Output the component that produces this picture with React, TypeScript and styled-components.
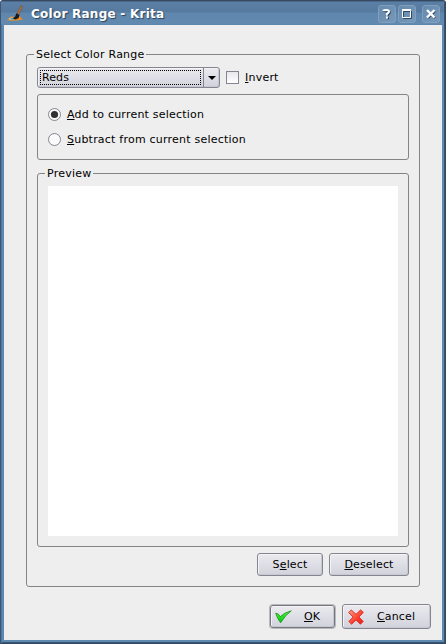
import React from "react";
import styled, { createGlobalStyle, css } from "styled-components";

const GlobalStyle = createGlobalStyle`
  * { box-sizing: border-box; }
  html, body { margin: 0; padding: 0; background: #fff; }
  body {
    font: 11px/14px "DejaVu Sans", sans-serif;
    letter-spacing: 0.22px;
    color: #000;
    overflow: hidden;
  }
`;

const Window = styled.div`
  width: 446px;
  height: 644px;
  display: flex;
  flex-direction: column;
  padding: 0 3px 3px;
  background: #5e89b1;
  border: 1px solid;
  border-color: #344961 #344961 #344961 #3c5673;
  border-radius: 3px 3px 0 0;
  box-shadow: inset 1px 0 #5178a0, inset -1px -1px #3a5370;
`;

const TitleBar = styled.header`
  flex: none;
  height: 24px;
  margin: 0 -2px 0 -3px;
  padding: 0 4px 0 6px;
  display: flex;
  align-items: center;
  border-top: 1px solid #49688a;
  border-bottom: 1px solid #5c86ae;
  background: linear-gradient(#5c7fa5 0, #56799f 45%, #5f87ae 50%, #628ab1 100%);
`;

const Title = styled.h1`
  flex: 1;
  margin: 1px 0 0 8px;
  font-size: 12px;
  line-height: 18px;
  letter-spacing: 0.25px;
  font-weight: bold;
  color: #fff;
  text-shadow: 1px 1px 1px #29405a;
`;

const TitleButton = styled.button<{ $apart?: boolean }>`
  width: 18px;
  height: 18px;
  margin: 1px 0 0 ${(p) => (p.$apart ? 6 : 2)}px;
  padding: 0;
  display: flex;
  align-items: center;
  justify-content: center;
  border: 1px solid #7f9fbd;
  border-radius: 3px;
  background: linear-gradient(135deg, #658aae, #7799b9);
  svg { display: block; }
`;

const Content = styled.main`
  flex: 1;
  padding: 29px 22px 0;
  background: #eeeeee;
`;

const Group = styled.section<{ $height: number; $pad: string; $gap?: number }>`
  height: ${(p) => p.$height}px;
  padding: ${(p) => p.$pad};
  margin-top: ${(p) => p.$gap ?? 0}px;
  border: 1px solid #848484;
  border-radius: 3px;
`;

const Legend = styled.div<{ $space: number }>`
  width: max-content;
  height: 14px;
  margin: -7px 0 ${(p) => p.$space}px -3px;
  padding: 0 2px 0 2px;
  background: #eeeeee;
`;

const Row = styled.div`
  display: flex;
  align-items: center;
  height: 21px;
`;

const raised = css`
  border: 1px solid #858592;
  border-radius: 3px;
  background: linear-gradient(#eaeaee, #dedee6 50%, #d2d2dc);
  box-shadow: inset 1px 1px #f4f4f6, inset -1px -1px #c7c7d2;
`;

const Combo = styled.div`
  ${raised}
  width: 183px;
  height: 21px;
  display: flex;
`;

const ComboValue = styled.div`
  width: 161px;
  margin: 2px 2px 2px 2px;
  padding-left: 1px;
  line-height: 13px;
  letter-spacing: 0.1px;
  border: 1px dotted #000;
`;

const ComboArrow = styled.div`
  flex: 1;
  display: flex;
  align-items: center;
  justify-content: center;
  border-left: 1px solid #858592;
`;

const CheckBox = styled.span`
  width: 13px;
  height: 13px;
  margin: 0 6px 0 6px;
  border: 1px solid #858592;
  background: linear-gradient(#e8e8ec, #ffffff);
`;

const Radio = styled.label<{ $gap?: number }>`
  display: flex;
  align-items: center;
  height: 13px;
  margin-top: ${(p) => p.$gap ?? 0}px;
`;

const RadioDot = styled.span`
  width: 13px;
  height: 13px;
  margin-right: 6px;
  display: flex;
  svg { display: block; }
`;

const Key = styled.span`
  text-decoration: underline;
  text-decoration-thickness: 1px;
  text-underline-offset: 1px;
  text-decoration-skip-ink: none;
`;

const Preview = styled.div`
  width: 350px;
  height: 350px;
  background: #fff;
`;

const Actions = styled.div<{ $gap: number; $top: number; $pull?: number }>`
  display: flex;
  justify-content: flex-end;
  gap: ${(p) => p.$gap}px;
  margin: ${(p) => p.$top}px ${(p) => p.$pull ?? 0}px 0 0;
`;

const Button = styled.button<{ $width: number; $tall?: boolean; $default?: boolean }>`
  ${raised}
  width: ${(p) => p.$width}px;
  height: ${(p) => (p.$tall ? 25 : 23)}px;
  padding: 0;
  display: flex;
  align-items: center;
  justify-content: ${(p) => (p.$tall ? "flex-start" : "center")};
  font: inherit;
  letter-spacing: 0.15px;
  color: #000;
  ${(p) =>
    p.$default &&
    css`
      border-color: #777780;
      box-shadow: inset 1px 1px #f4f4f6, inset -1px -1px #c7c7d2, 0 0 0 1px #b9b9bd;
      height: 23px;
      margin: 1px;
    `}
`;

const ButtonIcon = styled.span<{ $left: number; $gap: number }>`
  margin-left: ${(p) => p.$left}px;
  margin-right: ${(p) => p.$gap}px;
  svg { display: block; }
`;

const BrushIcon = () => (
  <svg width="16" height="17" viewBox="0 0 17 17" preserveAspectRatio="none">
    <path d="M0 14.5 4 11.5 9 12 13 11 17 14.5 11 15.5 3 15.8Z" fill="#e98a24" />
    <path d="M2 13.5 6 12 7 14.8 3 15Z" fill="#b9c6b5" />
    <path d="M4 13h3v1.5H4z" fill="#36a1c4" />
    <path d="M14.7.5 16.5 1.3 12.5 10 10.5 9Z" fill="#b9713a" stroke="#6c4932" strokeWidth=".5" />
    <path d="M10 8.2 13.2 10 12.4 13 9 14.5 6 13.2 8.6 11.8Z" fill="#171a20" />
  </svg>
);

const RadioArt = ({ on = false }: { on?: boolean }) => (
  <svg width="13" height="13" viewBox="0 0 13 13">
    <circle cx="6.5" cy="6.5" r="6" fill="#fafafa" stroke="#858592" />
    {on && <circle cx="6.5" cy="6.5" r="3.6" fill="#303030" />}
  </svg>
);

const CheckIcon = () => (
  <svg width="17" height="14" viewBox="0 0 17 14">
    <defs>
      <linearGradient id="green" x2="0" y2="1">
        <stop stopColor="#55f04b" />
        <stop offset="1" stopColor="#00c800" />
      </linearGradient>
    </defs>
    <path d="M.6 3.2 3 3.8 5.4 6.6Q9.5 2.3 16.3.8 10 5.5 5.6 12.8 2.5 9 .6 3.2Z" fill="url(#green)" stroke="#138a13" strokeWidth=".7" />
  </svg>
);

const CrossIcon = () => (
  <svg width="16" height="16" viewBox="0 0 16 16">
    <defs>
      <linearGradient id="red" x2="1" y2="1">
        <stop stopColor="#ff9c80" />
        <stop offset=".6" stopColor="#fb3e2c" />
        <stop offset="1" stopColor="#ee1515" />
      </linearGradient>
    </defs>
    <path d="M3.2.9 8 5.3 12.7.8 15.3 3.4 10.9 8 15.2 12.4 12.4 15.2 8 11 3.6 15.2.8 12.5 5.1 8 .7 3.7Z" fill="url(#red)" stroke="#d62b25" strokeWidth=".9" strokeLinejoin="round" />
  </svg>
);

export default function App() {
  return (
    <>
      <GlobalStyle />
      <Window>
        <TitleBar>
          <BrushIcon />
          <Title>Color Range - Krita</Title>
          <TitleButton aria-label="Help">
            <svg width="12" height="12" viewBox="0 0 12 12" fill="none">
              <path d="M3.5 4V3.6Q4.2 3 6.2 3 8.8 3 8.8 4.7 8.8 5.8 7 6.8V8.2M7 9.2v2" stroke="#2e4661" strokeWidth="2" />
              <path d="M2.5 3V2.6Q3.2 2 5.4 2 8 2 8 3.7 8 4.8 6 5.8V7.5M6 8.5v2" stroke="#fff" strokeWidth="2" />
            </svg>
          </TitleButton>
          <TitleButton aria-label="Maximize">
            <svg width="12" height="12" viewBox="0 0 12 12" fill="none">
              <path d="M2.5 3.5h8v7h-8z" stroke="#2e4661" />
              <path d="M1.5 2.5h8v7h-8zM1 1.5h9" stroke="#fff" />
            </svg>
          </TitleButton>
          <TitleButton aria-label="Close" $apart>
            <svg width="12" height="12" viewBox="0 0 12 12" fill="none" strokeWidth="2.4">
              <path d="m3 3 7 7m0-7-7 7" stroke="#2e4661" />
              <path d="m2 2 7.5 7.5m0-7.5L2 9.5" stroke="#fff" />
            </svg>
          </TitleButton>
        </TitleBar>
        <Content>
          <Group $height={533} $pad="0 10px">
            <Legend $space={5}>Select Color Range</Legend>
            <Row>
              <Combo>
                <ComboValue>Reds</ComboValue>
                <ComboArrow>
                  <svg width="8" height="4" viewBox="0 0 8 4"><path d="M0 0h8L4 4Z" /></svg>
                </ComboArrow>
              </Combo>
              <CheckBox />
              <span><Key>I</Key>nvert</span>
            </Row>
            <Group $height={66} $pad="13px 10px 0" $gap={6}>
              <Radio>
                <RadioDot><RadioArt on /></RadioDot>
                <span><Key>A</Key>dd to current selection</span>
              </Radio>
              <Radio $gap={12}>
                <RadioDot><RadioArt /></RadioDot>
                <span><Key>S</Key>ubtract from current selection</span>
              </Radio>
            </Group>
            <Group $height={374} $pad="0 10px" $gap={13}>
              <Legend $space={5}>Preview</Legend>
              <Preview />
            </Group>
            <Actions $gap={6} $top={6}>
              <Button $width={66}><span>S<Key>e</Key>lect</span></Button>
              <Button $width={80}><span><Key>D</Key>eselect</span></Button>
            </Actions>
          </Group>
          <Actions $gap={6} $top={17} $pull={-11}>
            <Button $width={65} $tall $default>
              <ButtonIcon $left={4} $gap={12}><CheckIcon /></ButtonIcon>
              <span><Key>O</Key>K</span>
            </Button>
            <Button $width={89} $tall>
              <ButtonIcon $left={5} $gap={13}><CrossIcon /></ButtonIcon>
              <span><Key>C</Key>ancel</span>
            </Button>
          </Actions>
        </Content>
      </Window>
    </>
  );
}
